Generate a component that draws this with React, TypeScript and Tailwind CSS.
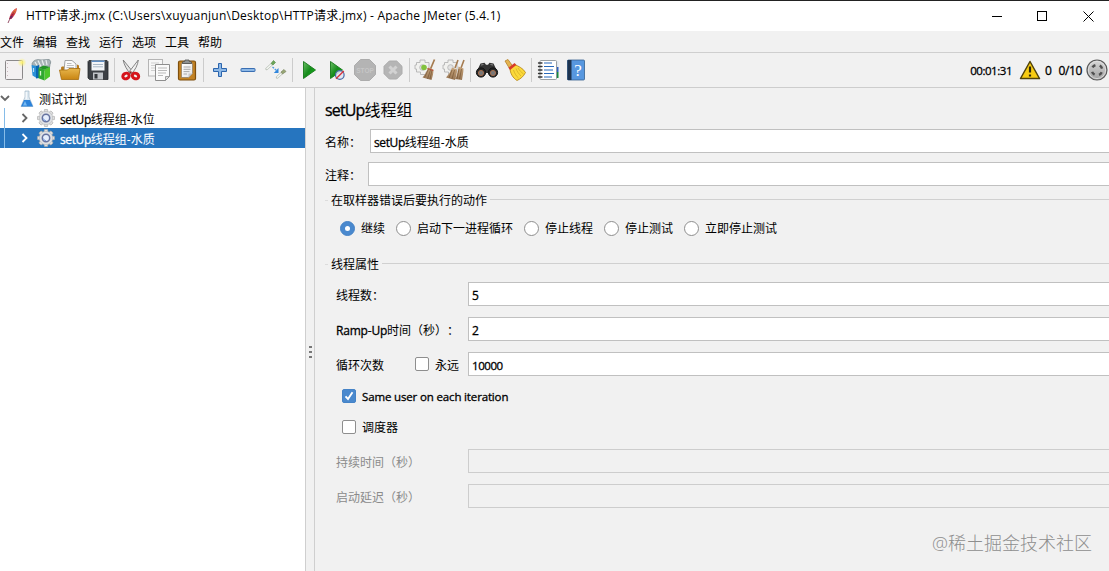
import React from "react";
import clsx from "clsx";

// JMeter main window: title bar, menu, toolbar, test plan tree and thread group editor

const menus = ["文件", "编辑", "查找", "运行", "选项", "工具", "帮助"];

const errorActions = [
  { label: "继续", checked: true },
  { label: "启动下一进程循环" },
  { label: "停止线程" },
  { label: "停止测试" },
  { label: "立即停止测试" },
];

function Svg({ children }: { children: React.ReactNode }) {
  return (
    <svg viewBox="0 0 24 24" className="block h-6 w-6" fill="none">
      {children}
    </svg>
  );
}

/* Shared gradients for the toolbar icons */
function Gradients() {
  return (
    <svg className="absolute h-0 w-0">
      <defs>
        <linearGradient id="gold" x1="0" y1="0" x2="0" y2="1">
          <stop offset="0" stopColor="#e8b64c" />
          <stop offset="1" stopColor="#c98512" />
        </linearGradient>
        <linearGradient id="green" x1="0" y1="0" x2="1" y2="1">
          <stop offset="0" stopColor="#6cc066" />
          <stop offset="0.5" stopColor="#168c1c" />
          <stop offset="1" stopColor="#0fc313" />
        </linearGradient>
        <linearGradient id="paper" x1="0" y1="0" x2="1" y2="1">
          <stop offset="0" stopColor="#ffffff" />
          <stop offset="1" stopColor="#e4e4e4" />
        </linearGradient>
        <linearGradient id="steel" x1="0" y1="0" x2="0" y2="1">
          <stop offset="0" stopColor="#d8d8d8" />
          <stop offset="1" stopColor="#a0a0a0" />
        </linearGradient>
        <linearGradient id="straw" x1="0" y1="0" x2="0" y2="1">
          <stop offset="0" stopColor="#c9a57b" />
          <stop offset="1" stopColor="#967452" />
        </linearGradient>
        <radialGradient id="glow">
          <stop offset="0" stopColor="#fff36b" />
          <stop offset="1" stopColor="#fff36b" stopOpacity="0" />
        </radialGradient>
      </defs>
    </svg>
  );
}

function NewIcon() {
  return (
    <Svg>
      <rect x="3.5" y="2.5" width="17" height="19" rx="1" fill="#f3f0f1" stroke="#8b898a" />
      <path d="M5.5 5v14" stroke="#c9b9bd" strokeDasharray="1 3" />
      <circle cx="20" cy="4.5" r="4.5" fill="url(#glow)" />
    </Svg>
  );
}

function TemplatesIcon() {
  return (
    <Svg>
      <path d="M2 6c1-4 5-5 9-4l8-.5c2 1 2 3 1 5l-1 6H4z" fill="#a9b4b8" stroke="#7d8b90" strokeWidth=".8" />
      <path d="M5 4l3 5M8 2.5l3 6M12 2l2 6M16 2l1 5" stroke="#e9eff0" strokeWidth="1.2" />
      <path d="M1.5 7l5 1v12l-4-2.5z" fill="#2b91d8" />
      <path d="M6 8l3-1v13l-3 .5z" fill="#0a66b0" />
      <path d="M8.5 10l6 1.5v11l-6-2.2z" fill="#2fa82f" />
      <path d="M14.5 11.5l5.5-2.6v9.6l-5.5 4z" fill="#4cc52a" />
      <path d="M10.5 13v4.5" stroke="#d7f3cd" strokeWidth="1.3" />
      <path d="M3.5 10v4" stroke="#bfe0f5" strokeWidth="1.2" />
      <path d="M8.5 10l5-2.4 6.5 1.3-5.5 2.6z" fill="#249428" />
    </Svg>
  );
}

function OpenIcon() {
  return (
    <Svg>
      <path d="M3 9.5l1-1h3l1 1.5h11V6.5l2 1V14l-1.5 6H4z" fill="#b97a18" />
      <path d="M6 12.5L7 2.5h7l4 3.5v7z" fill="#fbfbfb" stroke="#8f8f8f" strokeWidth=".8" />
      <path d="M9 5.5h4.5M8.8 7.5h7M8.5 9.5h7.5" stroke="#b5b5b5" strokeWidth=".9" />
      <path d="M1.5 12h8l1.5-1.5H22l-1.5 11H3.5z" fill="url(#gold)" stroke="#a66c0d" strokeWidth=".8" />
    </Svg>
  );
}

function SaveIcon() {
  return (
    <Svg>
      <path d="M3 2.5h18l1 1v18H3.5L2 20V3.5z" fill="#3c4045" stroke="#25282b" strokeWidth=".8" />
      <rect x="5.5" y="2.5" width="13" height="10" fill="#f2f5f8" />
      <path d="M5.5 3.2h13" stroke="#4f83bd" strokeWidth="1.4" />
      <path d="M7 6.5h10M7 8.8h10" stroke="#a9b8c6" />
      <rect x="7" y="14.5" width="10" height="7" fill="#bfc3c7" />
      <rect x="8.5" y="16" width="3" height="4.5" fill="#33373b" />
    </Svg>
  );
}

function CutIcon() {
  return (
    <Svg>
      <path d="M4.2 2l9.8 12-2.4 2C8 12 5 7 4.2 2z" fill="#e6e6e6" stroke="#777" strokeWidth=".9" />
      <path d="M19.3 2L10 14l2.2 2c4-4 6.6-9 7.1-14z" fill="#f2f2f2" stroke="#777" strokeWidth=".9" />
      <ellipse cx="7" cy="18" rx="3.3" ry="2.7" stroke="#d5141b" strokeWidth="3" transform="rotate(-28 7 18)" />
      <ellipse cx="16.5" cy="18" rx="3.3" ry="2.7" stroke="#d5141b" strokeWidth="3" transform="rotate(28 16.5 18)" />
      <circle cx="11.8" cy="14.2" r="1" fill="#8c2020" />
    </Svg>
  );
}

function CopyIcon() {
  return (
    <Svg>
      <rect x="1.5" y="1.5" width="14" height="16.5" fill="#f6f6f6" stroke="#b5b5b5" />
      <path d="M4 5h8M4 7.5h4M4 10h4M4 12.5h4" stroke="#cfcfcf" />
      <path d="M8.5 6.5h14v12l-4 4h-10z" fill="#fafafa" stroke="#8e8e8e" />
      <path d="M11 10h9M11 12.5h9M11 15h8M11 17.5h5" stroke="#b9b9b9" />
      <path d="M18.5 22.5v-4h4z" fill="#ddd" stroke="#8e8e8e" strokeWidth=".8" />
    </Svg>
  );
}

function PasteIcon() {
  return (
    <Svg>
      <rect x="3.5" y="3" width="17" height="19" rx="1.5" fill="#c28224" stroke="#7f4f0c" strokeWidth="1.2" />
      <path d="M6.5 5.5h11v10l-4 4h-7z" fill="url(#paper)" stroke="#8a7a62" strokeWidth=".7" />
      <path d="M8.5 9h7M8.5 11.3h7M8.5 13.6h6M8.5 16H12" stroke="#a8a8a8" />
      <path d="M13.5 19.5v-4h4z" fill="#c8c8c8" />
      <path d="M7.5 5.5V4L10 3.2V2h4v1.2l2.5.8v1.5z" fill="#8f9292" stroke="#505353" strokeWidth=".8" />
    </Svg>
  );
}

function PlusIcon() {
  return (
    <Svg>
      <path d="M10.5 5.5h3v5h5v3h-5v5h-3v-5h-5v-3h5z" fill="#8db8e6" stroke="#2c65ad" strokeLinejoin="round" />
    </Svg>
  );
}

function MinusIcon() {
  return (
    <Svg>
      <rect x="5" y="10.5" width="14" height="3" rx=".5" fill="#8db8e6" stroke="#3a6fb3" />
    </Svg>
  );
}

function ToggleIcon() {
  return (
    <Svg>
      <path d="M2.5 11L8 6" stroke="#b9c0b6" strokeWidth="2.4" strokeLinecap="round" />
      <path d="M2.5 11L8 6" stroke="#f8faf7" strokeWidth="1.2" />
      <path d="M7 5.5l2.5-3 2 2L9 7z" fill="#6ba657" stroke="#5d8f50" strokeWidth=".7" />
      <path d="M13 19.5l5-4.5" stroke="#b9c0b6" strokeWidth="2.4" strokeLinecap="round" />
      <path d="M13 19.5l5-4.5" stroke="#f8faf7" strokeWidth="1.2" />
      <path d="M17 14l3-2.5 2 2-3.5 2.5z" fill="#98a775" stroke="#7d8763" strokeWidth=".7" />
      <path d="M8.5 9l4 3.5" stroke="#4d98e2" strokeWidth="1.3" strokeDasharray="2 1" />
      <path d="M14.5 10v5H9.8z" fill="#2f86dc" />
    </Svg>
  );
}

function StartIcon() {
  return (
    <Svg>
      <path d="M6.5 3.5l12 8.5-12 8.5z" fill="url(#green)" stroke="#16771b" strokeWidth=".9" />
    </Svg>
  );
}

function StartNoPausesIcon() {
  return (
    <Svg>
      <path d="M5.5 3.5l12 8.5-12 8.5z" fill="url(#green)" stroke="#16771b" strokeWidth=".9" />
      <circle cx="14.8" cy="17" r="4.3" fill="#dfe5f2" fillOpacity=".85" stroke="#496aa8" strokeWidth="1.2" />
      <path d="M11 20.8l7.8-7.8" stroke="#d8323a" strokeWidth="1.3" />
    </Svg>
  );
}

function StopIcon() {
  return (
    <Svg>
      <path d="M7.5 1.5h9l6 6v9l-6 6h-9l-6-6v-9z" fill="#b4b4b4" stroke="#acacac" />
      <text x="12" y="14.5" textAnchor="middle" fontSize="6.5" fontWeight="700" fill="#c6c6c6" fontFamily="Liberation Sans, sans-serif">
        STOP
      </text>
    </Svg>
  );
}

function ShutdownIcon() {
  return (
    <Svg>
      <path d="M8.3 3h7.4L21 8.3v7.4L15.7 21H8.3L3 15.7V8.3z" fill="#b5b5b5" stroke="#acacac" />
      <path d="M8.5 8.5l7 7M15.5 8.5l-7 7" stroke="#d2d2d2" strokeWidth="3" />
    </Svg>
  );
}

function Gear() {
  return (
    <>
      <path d="M2.5 4.5H6V2h5v2.5h4V14h-3v2.5H6.5V14h-4v-3H1V7h1.5z" fill="#f1f1ef" stroke="#b4b4b4" strokeWidth=".9" />
      <circle cx="8.5" cy="9.5" r="2.8" fill="#e2e2e2" stroke="#bdbdbd" />
    </>
  );
}

function ClearIcon() {
  return (
    <Svg>
      <Gear />
      <path d="M20.5 1.5l-4 9.5" stroke="#a57b50" strokeWidth="1.7" />
      <path d="M14 9.5l5.5 2c0 4-1 7-2 10.5l-9-2.5c2.5-3 4.5-6 5.5-10z" fill="url(#straw)" />
      <path d="M14.5 11l-4 8.5M16.5 12l-3 9M18 12l-2 9" stroke="#765636" strokeWidth=".7" />
      <path d="M13.5 10.5l5.8 2" stroke="#b94937" />
      <circle cx="10" cy="9.5" r="2.8" fill="#82c23d" />
    </Svg>
  );
}

function ClearAllIcon() {
  return (
    <Svg>
      <Gear />
      <path d="M16 2l-3 8M22 2l-3 8" stroke="#a57b50" strokeWidth="1.6" />
      <path d="M10 9.5l5 2c0 4-1 7-2 10.5l-9-2.5c2.5-3 5-6 6-10z" fill="url(#straw)" />
      <path d="M16.5 8.5l5 2c0 4-1 8-1.5 11.5l-7-1c2-3 3-8 3.5-12.5z" fill="url(#straw)" />
      <path d="M10 12l-3 8M12.5 12l-2.5 9M17 11l-2 10M19.5 11l-2 10" stroke="#765636" strokeWidth=".7" />
    </Svg>
  );
}

function SearchIcon() {
  return (
    <Svg>
      <path d="M5.5 5.5l4-.8 1.5 2h2l1.5-2 4 .8L22 13l-9 2h-2l-9-2z" fill="#353535" />
      <circle cx="6" cy="14.5" r="4.6" fill="#282828" stroke="#111" />
      <circle cx="18" cy="14.5" r="4.6" fill="#282828" stroke="#111" />
      <circle cx="6" cy="15" r="2.6" fill="#777" stroke="#ae6f4c" strokeWidth=".9" />
      <circle cx="18" cy="15" r="2.6" fill="#777" stroke="#ae6f4c" strokeWidth=".9" />
      <path d="M6 7l2.5-.5M15.5 6.5L18 7" stroke="#888" />
    </Svg>
  );
}

function BroomIcon() {
  return (
    <Svg>
      <path d="M2 3l3-1.5 5 7-3.5 2z" fill="#e5b451" stroke="#b4822a" strokeWidth=".8" />
      <path d="M7 10l4.5-3.5C15 8 20 10 22.5 14.5c-2 4-5 6.5-8.5 8C10 20 7 15.5 7 10z" fill="#fbd93a" stroke="#b28213" strokeWidth=".8" />
      <path d="M10.5 12c1 3 2.5 6 5 8M13 10.5c1 3 3 5.5 5 7.5M15 10c1.5 2.5 3 4 5.5 6" stroke="#d3ae28" strokeWidth=".8" />
      <path d="M6.2 10.8L12.5 6" stroke="#d83c28" strokeWidth="2.8" />
    </Svg>
  );
}

function FunctionIcon() {
  return (
    <Svg>
      <path d="M20 3h2.5v6H20z" fill="#dfe6ee" />
      <path d="M20 9h2.5v5H20z" fill="#2d5fc0" />
      <path d="M20 14h2.5v6H20z" fill="#16893f" />
      <rect x="4" y="2.5" width="16.5" height="19" rx="1" fill="#fff" stroke="#8e9598" strokeWidth=".9" />
      <path d="M8 5h8M8 8.5h10M8 12h9M8 15.5h10M8 19h8" stroke="#2769bb" strokeWidth="1.2" />
      <path d="M2.5 5H6M2.5 8.5H6M2.5 12H6M2.5 15.5H6M2.5 19H6" stroke="#333" strokeWidth="1.3" strokeLinecap="round" />
    </Svg>
  );
}

function HelpIcon() {
  return (
    <Svg>
      <rect x="3.5" y="2" width="17" height="20" rx="1" fill="#5797df" stroke="#35618f" strokeWidth=".8" />
      <path d="M3.5 2h4v20h-4z" fill="#1e3450" />
      <text x="14" y="17.5" textAnchor="middle" fontSize="17" fill="#fff" fontFamily="Liberation Serif, serif">
        ?
      </text>
    </Svg>
  );
}

const toolGroups = [
  [NewIcon, TemplatesIcon, OpenIcon, SaveIcon],
  [CutIcon, CopyIcon, PasteIcon],
  [PlusIcon, MinusIcon, ToggleIcon],
  [StartIcon, StartNoPausesIcon, StopIcon, ShutdownIcon],
  [ClearIcon, ClearAllIcon],
  [SearchIcon, BroomIcon],
  [FunctionIcon, HelpIcon],
];

function Feather() {
  return (
    <svg viewBox="0 0 12 16" className="h-4 w-3" fill="none">
      <path d="M10.5.5C7 2 4.5 6 3.5 11l2-.5c2.500-3 5-6.500 5-10z" fill="#c8283c" stroke="#c8283c" strokeWidth=".6" />
      <path d="M10.5.5C8.5 1.500 7 3.500 6 6l3-1z" fill="#f08036" />
      <path d="M3.5 11l2-.5L7 8H4.5z" fill="#6e2a76" />
      <path d="M8.5 3.5C6 7 4 10 2 15" stroke="#7a2541" strokeWidth=".8" />
    </svg>
  );
}

function Flask() {
  return (
    <svg viewBox="0 0 14 18" className="h-[18px] w-3.5" fill="none">
      <path d="M5 1h4v6l4 9.5H1L5 7z" fill="#dce8f1" stroke="#a5b7c5" strokeWidth=".7" />
      <path d="M4 10h6l3 6.5H1z" fill="#2d83da" />
      <path d="M5 11l-2 4.5h4z" fill="#77baf2" />
      <path d="M6.2 2v7" stroke="#fff" />
    </svg>
  );
}

function Cog() {
  const teeth = [0, 45, 90, 135, 180, 225, 270, 315];
  return (
    <svg viewBox="0 0 20 20" className="h-5 w-5" fill="none">
      {teeth.map((t) => (
        <path key={t} d="M8 4l.5-2.5h3L12 4z" fill="#dedede" stroke="#a8a8a8" strokeWidth=".6" transform={`rotate(${t} 10 10)`} />
      ))}
      <circle cx="10" cy="10" r="6.6" fill="#dfe1e4" stroke="#b8babd" strokeWidth=".5" />
      <circle cx="10" cy="10" r="3.7" fill="#e6eefc" stroke="#6673a0" strokeWidth="1.5" />
      <path d="M7.5 10.5a2.5 2.5 0 002.5 2.2" stroke="#7b9cdf" />
    </svg>
  );
}

function Chevron({ down, className }: { down?: boolean; className: string }) {
  return (
    <svg viewBox="0 0 10 10" className={clsx("h-2.5 w-2.5", className)} fill="none">
      <path d={down ? "M1 2l4 4 4-4" : "M2.5 1l4 4-4 4"} stroke="currentColor" strokeWidth="1.8" />
    </svg>
  );
}

// Latin runs are drawn a little heavier and tighter than the Chinese text
function Latin({ className = "tracking-[-0.3px]", children }: { className?: string; children: React.ReactNode }) {
  return <span className={clsx("font-medium [-webkit-text-stroke:0.3px]", className)}>{children}</span>;
}

function TextField({ children, disabled }: { children?: React.ReactNode; disabled?: boolean }) {
  return (
    <div
      className={clsx(
        "flex h-6 flex-1 items-center border border-r-0 pt-[3px] pl-[3px]",
        disabled ? "border-[#cdcdcd] bg-[#f1f1f1]" : "border-[#c0c0c0] bg-white"
      )}
    >
      {children}
    </div>
  );
}

function Checkbox({ checked }: { checked?: boolean }) {
  return (
    <span
      className={clsx(
        "flex h-3.5 w-3.5 shrink-0 items-center justify-center rounded-[2px] border",
        checked ? "border-[#4583c7] bg-[#4a89ce]" : "border-[#8e8e8e] bg-white"
      )}
    >
      {checked && (
        <svg viewBox="0 0 12 12" className="h-3 w-3 shrink-0" fill="none">
          <path d="M2.5 6.3L5 9l4.5-6.7" stroke="#fff" strokeWidth="1.9" />
        </svg>
      )}
    </span>
  );
}

function Legend({ children }: { children: React.ReactNode }) {
  return (
    <div className="flex h-4 items-center">
      <span className="mr-[3px] w-[3px] border-t border-[#dcdcdc]" />
      <span className="pt-0.5 leading-4">{children}</span>
      <span className="-mt-px ml-[3px] flex-1 border-t border-[#d0d0d0]" />
    </div>
  );
}

export default function App() {
  return (
    <div className="flex h-[571px] w-[1109px] flex-col overflow-hidden bg-[#f1f1f1] font-['Open_Sans','Noto_Sans_CJK_SC',sans-serif] text-xs leading-4 text-black [text-spacing-trim:space-all]">
      <Gradients />

      {/* Title bar */}
      <header className="flex h-[31px] shrink-0 items-center border-t border-[#222] bg-white pl-1.5">
        <Feather />
        <span className="ml-2 whitespace-nowrap tracking-[0.23px]">
          HTTP请求.jmx (C:\Users\xuyuanjun\Desktop\HTTP请求.jmx) - Apache JMeter (5.4.1)
        </span>
        <svg viewBox="0 0 109 12" className="mr-[14px] ml-auto h-3 w-[109px]" fill="none" stroke="#000" shapeRendering="crispEdges">
          <path d="M6 6.5h10" />
          <path d="M51.5 1.5h9v9h-9z" />
          <path d="M97.5 1.5l10 10M107.5 1.5l-10 10" shapeRendering="auto" />
        </svg>
      </header>

      {/* Menu */}
      <nav className="flex h-[22px] shrink-0 items-center gap-[9px] border-b border-[#cfcfcf] pt-0.5">
        {menus.map((m) => (
          <span key={m}>{m}</span>
        ))}
      </nav>

      {/* Toolbar */}
      <div className="flex h-[35px] shrink-0 items-center border-b border-[#cdcdcd]">
        {toolGroups.map((group, i) => (
          <React.Fragment key={i}>
            {i > 0 && (
              <span className="flex w-[5px] justify-center">
                <span className="h-6 w-px bg-[#cccccc]" />
              </span>
            )}
            {group.map((Icon, j) => (
              <span key={j} className="flex w-7 justify-center">
                <Icon />
              </span>
            ))}
          </React.Fragment>
        ))}
        <div className="mr-px ml-auto flex items-center">
          <span className="pt-0.5"><Latin className="text-[11.5px] tracking-[-0.45px]">00:01:31</Latin></span>
          <svg viewBox="0 0 22 20" className="ml-[7px] h-5 w-[22px]" fill="none">
            <path d="M11 1.5l9.5 17h-19z" fill="#f8cc12" stroke="#51430a" strokeWidth="1.5" strokeLinejoin="round" />
            <path d="M11 6.5v6M11 14.5v2" stroke="#2d270b" strokeWidth="2.2" />
          </svg>
          <span className="ml-1 pt-0.5"><Latin>0</Latin></span>
          <span className="ml-[7px] pt-0.5"><Latin className="tracking-[-0.4px]">0/10</Latin></span>
          <svg viewBox="0 0 22 22" className="ml-1 h-[22px] w-[22px]" fill="none">
            <circle cx="11" cy="11" r="10" fill="url(#steel)" stroke="#5a5a5a" strokeWidth="1.2" />
            <circle cx="11" cy="11" r="8.6" stroke="#e2e2e2" strokeWidth=".8" />
            <circle cx="11" cy="11" r="5.2" stroke="#505050" strokeWidth="2.4" strokeDasharray="3.6 4.568" strokeDashoffset="-2.284" />
          </svg>
        </div>
      </div>

      <div className="flex min-h-0 flex-1">
        {/* Test plan tree */}
        <aside className="w-[305px] shrink-0 bg-white pt-px">
          <div className="flex h-[19px] items-center">
            <Chevron down className="text-[#666]" />
            <span className="mr-[5px] ml-2.5"><Flask /></span>
            <span className="pt-0.5">测试计划</span>
          </div>
          {["水位", "水质"].map((name, i) => (
            <div key={name} className={clsx("flex h-5 items-center", i === 1 && "bg-[#2675bf] text-white")}>
              <span className="ml-1 h-5 w-px bg-[#86bce8]" />
              <Chevron className={clsx("ml-[15px]", i === 1 ? "text-white" : "text-[#666]")} />
              <span className="mr-1 ml-1.5"><Cog /></span>
              <span className="pt-[3px]">
                <Latin className="tracking-[-0.4px]">setUp</Latin>线程组-{name}
              </span>
            </div>
          ))}
        </aside>

        {/* Split pane divider */}
        <div className="flex w-2.5 shrink-0 flex-col items-center justify-center gap-[3px] border-r border-l border-[#cfcfcf] pt-11">
          <span className="h-0.5 w-[3px] bg-[#777]" />
          <span className="h-0.5 w-[3px] bg-[#777]" />
          <span className="h-0.5 w-[3px] bg-[#777]" />
        </div>

        {/* Thread group editor */}
        <main className="relative min-w-0 flex-1 pl-2.5">
          <h1 className="pt-2.5 text-base leading-6">
            <Latin className="tracking-[-0.85px]">setUp</Latin>线程组
          </h1>
          <div className="mt-[7px] flex items-center">
            <label className="w-[45px] pt-[3px]">名称：</label>
            <TextField>
              <span>
                <Latin className="tracking-[-0.4px]">setUp</Latin>线程组-水质
              </span>
            </TextField>
          </div>
          <div className="mt-[9px] flex items-center">
            <label className="w-[43px] pt-[3px]">注释：</label>
            <TextField />
          </div>

          <section className="mt-1.5">
            <Legend>在取样器错误后要执行的动作</Legend>
            <div className="mt-[13px] flex h-[15px] items-center gap-[11px] pl-[15px]">
              {errorActions.map((a) => (
                <label key={a.label} className="flex items-center gap-1.5">
                  <span
                    className={clsx(
                      "flex h-[15px] w-[15px] items-center justify-center rounded-full border",
                      a.checked ? "border-[#4583c7] bg-[#4a89ce]" : "border-[#8e8e8e] bg-white"
                    )}
                  >
                    {a.checked && <span className="h-[5px] w-[5px] rounded-full bg-white" />}
                  </span>
                  <span className="pt-px">{a.label}</span>
                </label>
              ))}
            </div>
          </section>

          <section className="mt-5">
            <Legend>线程属性</Legend>
            <div className="mt-2.5 flex flex-col gap-[11px] pl-[11px]">
              <div className="flex items-center">
                <label className="w-[132px] pt-[3px]">线程数：</label>
                <TextField><Latin>5</Latin></TextField>
              </div>
              <div className="flex items-center">
                <label className="w-[132px] whitespace-nowrap pt-[3px]">
                  <Latin className="tracking-[-0.2px]">Ramp-Up</Latin>时间（秒）：
                </label>
                <TextField><Latin>2</Latin></TextField>
              </div>
              <div className="flex items-center">
                <label className="w-[79px] pt-[3px]">循环次数</label>
                <label className="flex w-[53px] items-center gap-1.5">
                  <Checkbox /> <span className="pt-[3px]">永远</span>
                </label>
                <TextField><Latin className="text-[11.5px] tracking-[-0.45px]">10000</Latin></TextField>
              </div>
            </div>
            <label className="mt-3 flex h-4 items-center gap-1.5 pl-[17px]">
              <Checkbox checked />
              <span className="pt-0.5"><Latin className="text-[11.5px] tracking-[-0.15px]">Same user on each iteration</Latin></span>
            </label>
            <label className="mt-[15px] flex h-4 items-center gap-1.5 pl-[17px]">
              <Checkbox /> <span className="pt-0.5">调度器</span>
            </label>
            <div className="mt-3.5 flex flex-col gap-[11px] pl-[11px] text-[#8b8b8b]">
              {["持续时间（秒）", "启动延迟（秒）"].map((label) => (
                <div key={label} className="flex items-center">
                  <label className="w-[132px] pt-[3px]">{label}</label>
                  <TextField disabled />
                </div>
              ))}
            </div>
          </section>

          <span className="absolute right-[17px] bottom-3.5 text-lg leading-7 font-light text-[#8e8e8e]">@稀土掘金技术社区</span>
        </main>
      </div>
    </div>
  );
}
